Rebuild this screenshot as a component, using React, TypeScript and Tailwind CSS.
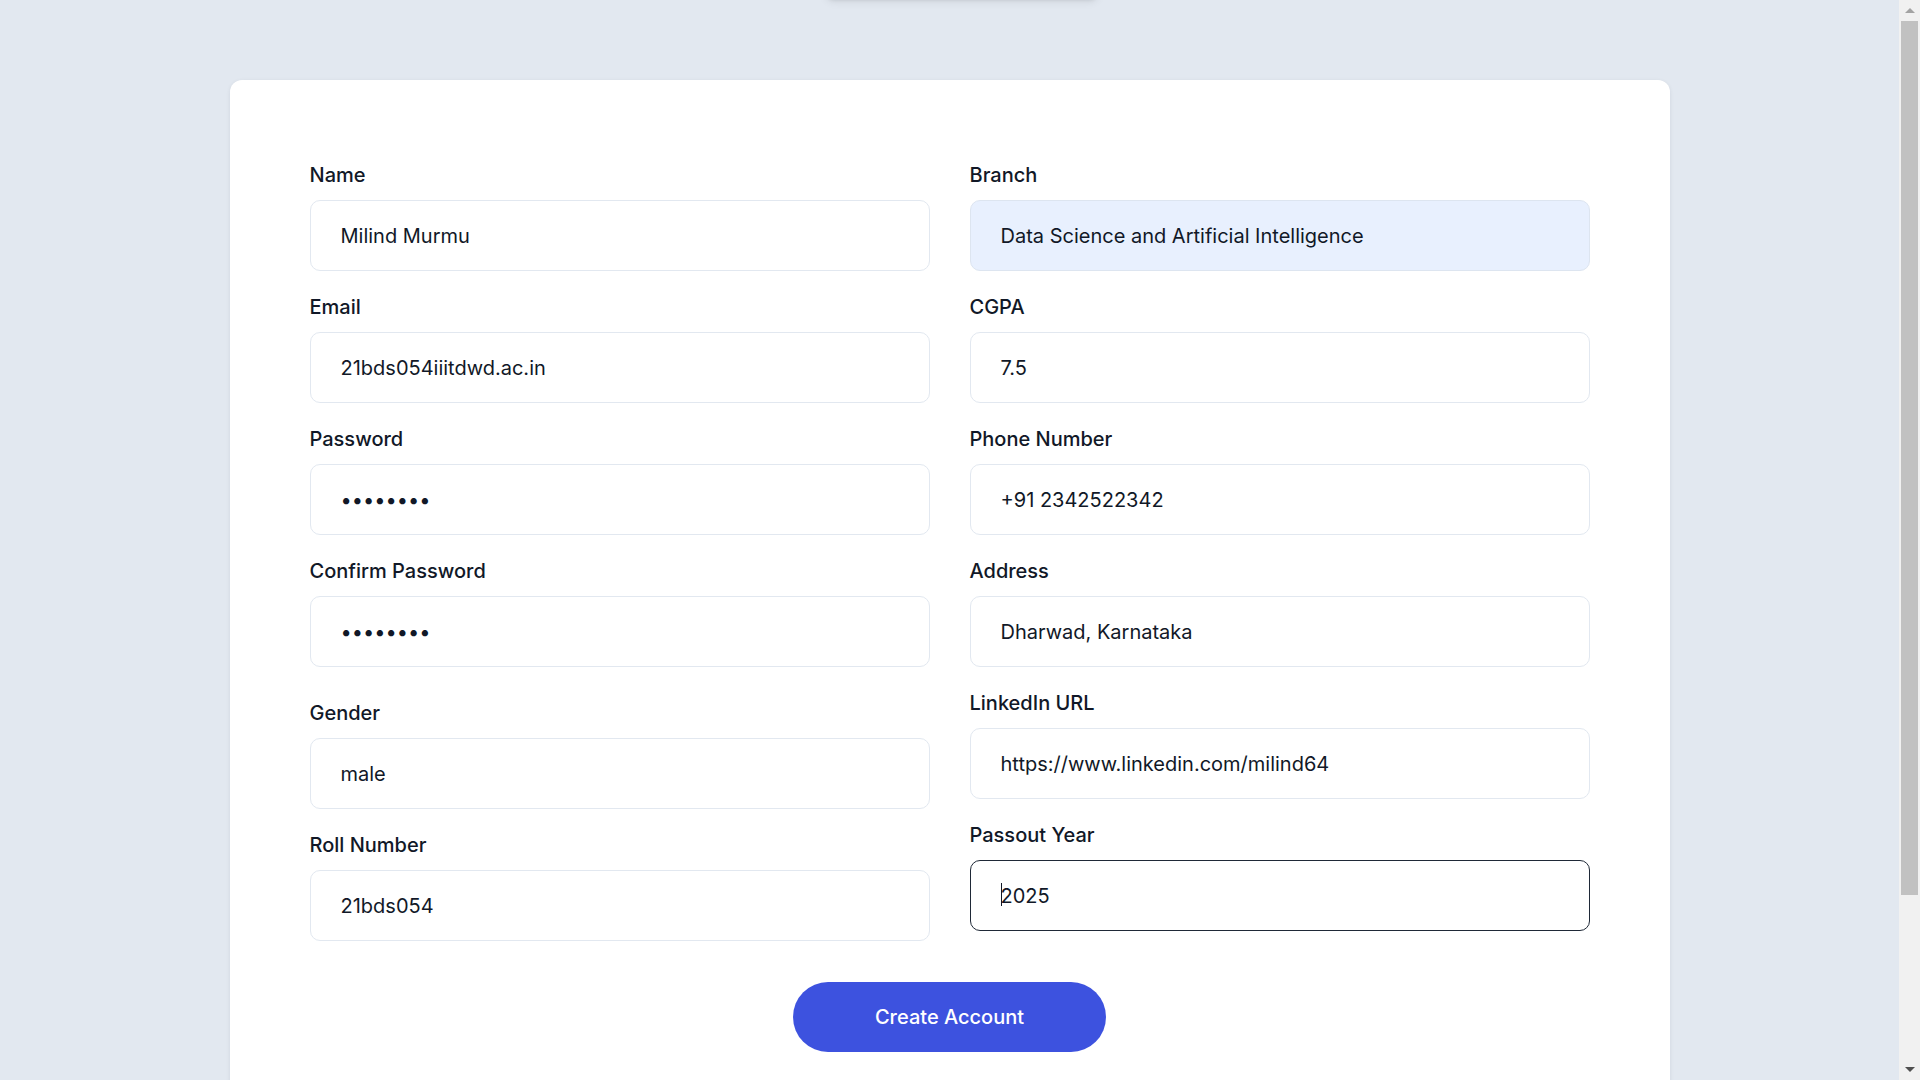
import React from "react";

type Field = {
  label: string;
  value: string;
  type?: string;
  autofill?: boolean;
  focused?: boolean;
  extraTop?: boolean;
};

const leftFields: Field[] = [
  { label: "Name", value: "Milind Murmu" },
  { label: "Email", value: "21bds054iiitdwd.ac.in" },
  { label: "Password", value: "password", type: "password" },
  { label: "Confirm Password", value: "password", type: "password" },
  { label: "Gender", value: "male", extraTop: true },
  { label: "Roll Number", value: "21bds054" },
];

const rightFields: Field[] = [
  { label: "Branch", value: "Data Science and Artificial Intelligence", autofill: true },
  { label: "CGPA", value: "7.5" },
  { label: "Phone Number", value: "+91 2342522342" },
  { label: "Address", value: "Dharwad, Karnataka" },
  { label: "LinkedIn URL", value: "https://www.linkedin.com/milind64" },
  { label: "Passout Year", value: "2025", focused: true },
];

function FormField({ field }: { field: Field }) {
  const base =
    "block h-[71px] w-full rounded-[10px] border px-[30px] text-xl leading-7 text-[#111827] outline-none";
  const look = field.focused
    ? "border-[#1f2937] bg-white"
    : field.autofill
      ? "border-[#dde5f0] bg-[#e8f0fe]"
      : "border-[#e2e8f0] bg-white";

  return (
    <div className={field.extraTop ? "mt-[10px]" : ""}>
      <label className="mb-[11px] block text-xl font-medium leading-7 text-[#111827]">
        {field.label}
      </label>
      <div className="relative">
        <input
          type={field.type ?? "text"}
          defaultValue={field.value}
          className={`${base} ${look}`}
        />
        {field.focused && (
          <span className="pointer-events-none absolute left-[31px] top-[23px] h-[23px] w-px bg-[#111827]" />
        )}
      </div>
    </div>
  );
}

// the browser's classic scrollbar, as seen in the screenshot
function Scrollbar() {
  return (
    <div className="fixed right-0 top-0 flex h-screen w-[21px] flex-col bg-[#f1f1f1]">
      <div className="flex h-[21px] items-center justify-center">
        <div className="h-0 w-0 border-x-[5px] border-b-[5px] border-x-transparent border-b-[#a3a3a3]" />
      </div>
      <div className="mx-[2px] h-[874px] bg-[#c1c1c1]" />
      <div className="flex-1" />
      <div className="flex h-[21px] items-center justify-center">
        <div className="h-0 w-0 border-x-[5px] border-t-[5px] border-x-transparent border-t-[#505050]" />
      </div>
    </div>
  );
}

export default function App() {
  return (
    <div className="relative min-h-screen w-[1899px] bg-[#e2e8f0] pt-20 pb-20 font-['Inter',sans-serif]">
      {/* toast parked above the viewport, only its shadow shows */}
      <div className="absolute left-[826px] top-[-56px] h-[54px] w-[272px] rounded-lg bg-white shadow-[0_3px_10px_rgba(0,0,0,0.1),0_3px_3px_rgba(0,0,0,0.05)]" />

      <div className="mx-auto w-[1440px] rounded-xl bg-white px-20 pt-[81px] pb-[160px] shadow-[0_1px_4px_rgba(15,23,42,0.08)]">
        <form className="flex flex-col items-center" onSubmit={(e) => e.preventDefault()}>
          <div className="grid w-full grid-cols-2 items-start gap-x-10">
            <div className="flex flex-col gap-[22px]">
              {leftFields.map((f) => (
                <FormField key={f.label} field={f} />
              ))}
            </div>
            <div className="flex flex-col gap-[22px]">
              {rightFields.map((f) => (
                <FormField key={f.label} field={f} />
              ))}
            </div>
          </div>

          <button
            type="submit"
            className="mt-[41px] h-[70px] w-[313px] rounded-full bg-[#3d52df] text-xl font-medium text-white"
          >
            Create Account
          </button>
        </form>
      </div>

      <Scrollbar />
    </div>
  );
}
